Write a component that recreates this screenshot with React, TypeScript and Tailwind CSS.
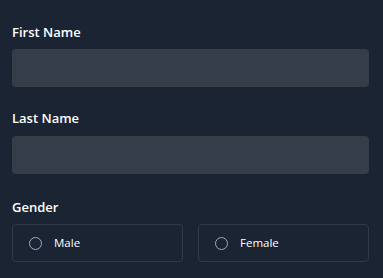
export default function App() {
  return (
    <div
      className="w-[383px] h-[278px] bg-[#1b2432] px-3 pt-[22px]"
      style={{ fontFamily: '"Open Sans", "Noto Sans", sans-serif' }}
    >
      <label className="block text-[13px] leading-5 font-semibold text-white mb-[7px]">First Name</label>
      <div className="w-[357px] h-[38px] rounded-[4px] bg-[#343d48]" />

      <label className="block text-[13px] leading-5 font-semibold text-white mt-[21px] mb-[8px]">Last Name</label>
      <div className="w-[357px] h-[38px] rounded-[4px] bg-[#343d48]" />

      <label className="block text-[13px] leading-5 font-semibold text-white mt-[23px] mb-[7px]">Gender</label>
      <div className="flex gap-[15px] w-[357px]">
        {['Male', 'Female'].map((g) => (
          <div
            key={g}
            className="flex-1 h-[38px] flex items-center gap-[12px] pl-[16px] rounded-[4px] border border-[#303a48]"
          >
            <span className="w-[13px] h-[13px] rounded-full border-[1.5px] border-[#9aacc6]" />
            <span className="text-[11.5px] text-white">{g}</span>
          </div>
        ))}
      </div>
    </div>
  );
}
